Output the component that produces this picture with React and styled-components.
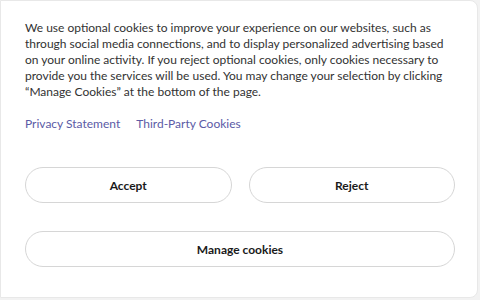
import React from "react";
import styled, { createGlobalStyle } from "styled-components";

const GlobalStyle = createGlobalStyle`
  html, body {
    margin: 0;
    padding: 0;
    background: #f2f2f2;
  }
  body {
    font-family: Lato, "Noto Sans", sans-serif;
  }
`;

const Card = styled.div`
  box-sizing: border-box;
  width: 478px;
  height: 298px;
  background: #ffffff;
  border: 1px solid #e8e8e8;
  border-radius: 0 8px 8px 0;
  padding: 19px 22px 0 24px;
`;

const Message = styled.p`
  margin: 0;
  font-size: 12px;
  line-height: 16px;
  color: #323232;
  white-space: nowrap;
`;

const LinkRow = styled.div`
  display: flex;
  gap: 16px;
  margin-top: 16px;
`;

const Link = styled.a`
  font-size: 12px;
  line-height: 16px;
  color: #5b5ba6;
  text-decoration: none;
`;

const Actions = styled.div`
  display: grid;
  grid-template-columns: 1fr 1fr;
  column-gap: 17px;
  row-gap: 28px;
  margin-top: 35px;
`;

const Button = styled.button`
  grid-column: ${(p) => (p.$wide ? "1 / -1" : "auto")};
  height: 36px;
  background: #ffffff;
  border: 1px solid #d6d6d6;
  border-radius: 18px;
  font-family: Lato, "Noto Sans", sans-serif;
  font-size: 12px;
  font-weight: 700;
  color: #1a1a1a;
  cursor: pointer;
`;

export default function App() {
  return (
    <>
      <GlobalStyle />
      <Card>
        <Message>
          We use optional cookies to improve your experience on our websites, such as
          <br />
          through social media connections, and to display personalized advertising based
          <br />
          on your online activity. If you reject optional cookies, only cookies necessary to
          <br />
          provide you the services will be used. You may change your selection by clicking
          <br />
          “Manage Cookies” at the bottom of the page.
        </Message>
        <LinkRow>
          <Link href="#">Privacy Statement</Link>
          <Link href="#">Third-Party Cookies</Link>
        </LinkRow>
        <Actions>
          <Button>Accept</Button>
          <Button>Reject</Button>
          <Button $wide>Manage cookies</Button>
        </Actions>
      </Card>
    </>
  );
}
